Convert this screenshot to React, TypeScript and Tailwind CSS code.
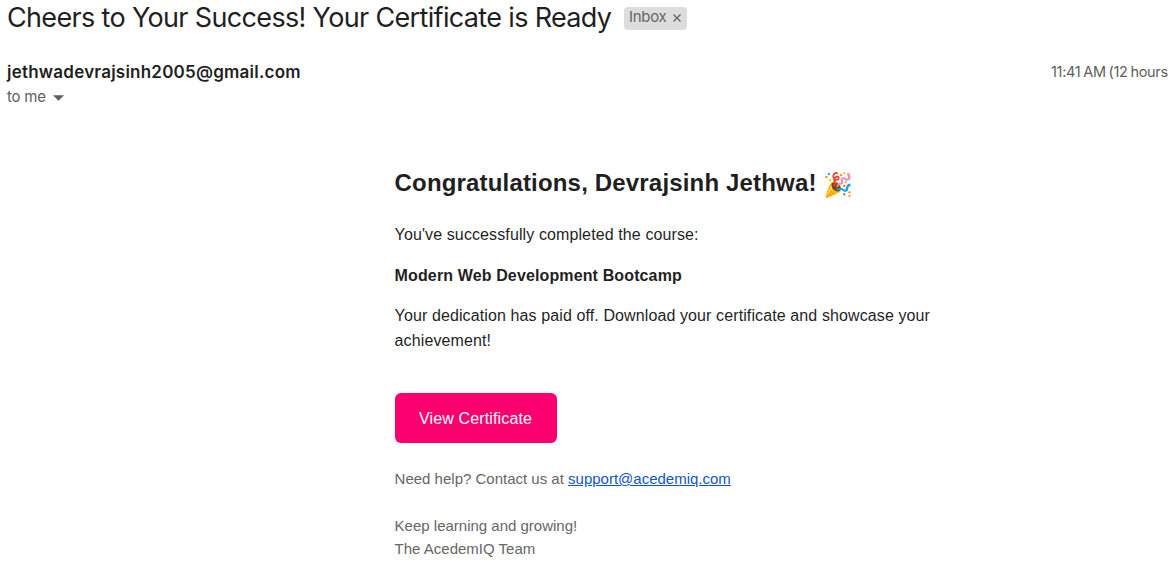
export default function App() {
  return (
    <main className="flex h-[572px] w-[1168px] flex-col overflow-hidden bg-white font-['Liberation_Sans',Arial,sans-serif] text-[#1f1f1f]">
      <header className="flex h-[108px] flex-col pl-[7px]">
        <div className="flex h-[36px] items-center">
          <h1 className="w-[617px] whitespace-nowrap font-[Inter,sans-serif] text-[27px] tracking-[-0.66px]">Cheers to Your Success! Your Certificate is Ready</h1>
          <div className="flex h-[23px] w-[63px] items-center justify-between rounded-[4px] bg-[#ddd] pl-[5px] pr-[5px] text-[#666]">
            <span className="-mt-px font-[Inter,sans-serif] text-[15px] tracking-[-0.3px]">Inbox</span>
            <svg className="h-[10px] w-[10px]" viewBox="0 0 10 10" fill="none" stroke="currentColor" strokeWidth="1.4">
              <path d="M1.5 1.5l7 7M8.5 1.5l-7 7" />
            </svg>
          </div>
        </div>
        <div className="mt-[24px] flex h-[24px] items-center justify-between whitespace-nowrap font-[Inter,sans-serif]">
          <span className="mt-[2px] text-[17px] font-semibold tracking-[0.23px]">jethwadevrajsinh2005@gmail.com</span>
          <span className="w-[117px] text-[14.5px] tracking-[-0.3px] text-[#5e5e5e] [word-spacing:-1px]">11:41 AM (12 hours</span>
        </div>
        <div className="flex h-[26px] items-center gap-[7px] text-[#5e5e5e]">
          <span className="mt-[2px] font-[Inter,sans-serif] text-[15px] tracking-[-0.2px]">to me</span>
          <svg className="mt-[3px] h-[6px] w-[11px]" viewBox="0 0 11 6" fill="currentColor">
            <path d="M0 .2h11L5.5 5.7z" />
          </svg>
        </div>
      </header>
      <article className="flex w-[945px] flex-col items-start pl-[394.6px] pt-[57px]">
        <h2 className="flex h-[36px] items-center whitespace-nowrap text-[24px] font-bold tracking-[0.17px]">
          <span>Congratulations, Devrajsinh Jethwa!</span>
          <span className="ml-[6px] mt-[4px] text-[24px] font-normal">🎉</span>
        </h2>
        <p className="mt-[21px] text-[16px] leading-[25px] tracking-[0.11px]">You've successfully completed the course:</p>
        <p className="mt-[16px] text-[16px] font-bold leading-[25px] tracking-[0.13px]">Modern Web Development Bootcamp</p>
        <p className="mt-[15px] whitespace-nowrap text-[16px] leading-[25px] tracking-[0.11px]">
          Your dedication has paid off. Download your certificate and showcase your<br />achievement!
        </p>
        <button className="mt-[40px] h-[50px] w-[162px] rounded-[6px] bg-[#fc0070] pt-[2px] text-[16px] tracking-[0.13px] text-white">View Certificate</button>
        <p className="mt-[24px] text-[15px] leading-[23px] text-[#666]">
          Need help? Contact us at <a className="text-[#1155cc] underline">support@acedemiq.com</a>
        </p>
        <p className="mt-[24px] text-[15px] leading-[23px] text-[#666]">
          Keep learning and growing!<br />The AcedemIQ Team
        </p>
      </article>
    </main>
  );
}
